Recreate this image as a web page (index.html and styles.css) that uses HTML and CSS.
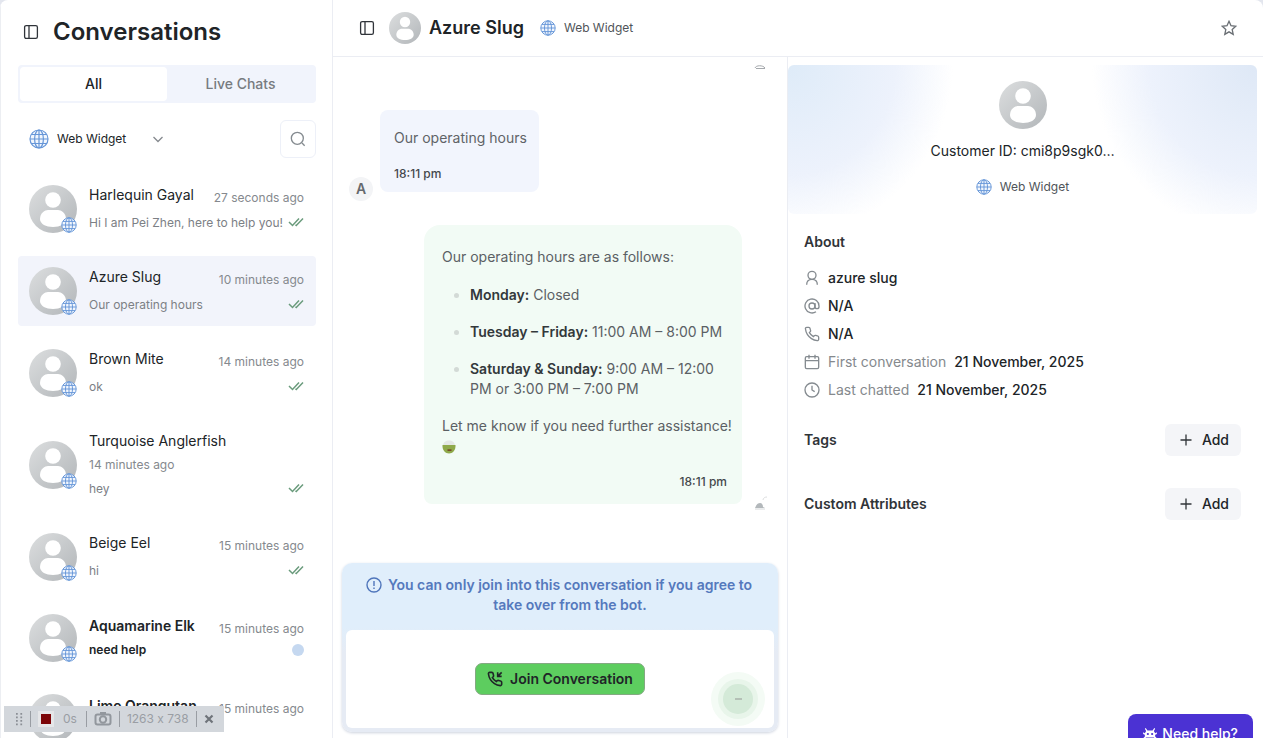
FILE: index.html
```html
<!DOCTYPE html>
<html lang="en">
<head>
<meta charset="utf-8">
<title>Conversations</title>
<link rel="stylesheet" href="styles.css">
</head>
<body>
<svg class="sprite" aria-hidden="true">
  <defs>
    <linearGradient id="silver" x1="0" y1="0" x2="1" y2="1">
      <stop offset="0" stop-color="#dcdedf"/><stop offset="1" stop-color="#b2b6b9"/>
    </linearGradient>
  </defs>
  <symbol id="person" viewBox="0 0 48 48">
    <circle cx="24" cy="24" r="24" fill="url(#silver)"/>
    <circle cx="24" cy="15" r="7.8" fill="#fff"/>
    <path d="M11 34c0-6 5-9 8-9h10c3 0 8 3 8 9 0 5-6 8-13 8s-13-3-13-8z" fill="#fff"/>
  </symbol>
  <symbol id="globe" viewBox="0 0 20 20">
    <g fill="none" stroke="#6696d8" stroke-width="1.2">
      <circle cx="10" cy="10" r="9" fill="#f1f6fd"/>
      <ellipse cx="10" cy="10" rx="4.4" ry="9"/>
      <path d="M10 1v18M1 10h18M2.5 5.5h15M2.5 14.5h15"/>
    </g>
  </symbol>
  <symbol id="panel" viewBox="0 0 16 16">
    <g fill="none" stroke="#30343a" stroke-width="1.3">
      <rect x="1.6" y="1.6" width="12.8" height="12.8" rx="1.6"/><path d="M6 1.6v12.8"/>
    </g>
  </symbol>
  <symbol id="checks" viewBox="0 0 16 12">
    <path d="M1 6l3.500 3.500L11 2.500M7.500 8.700l.8.8L15 2.500" fill="none" stroke="#6a9b7c" stroke-width="1.5"/>
  </symbol>
  <symbol id="phone" viewBox="0 0 24 24">
    <path d="M22 16.92v3a2 2 0 0 1-2.18 2 19.79 19.79 0 0 1-8.63-3.07 19.5 19.5 0 0 1-6-6 19.79 19.79 0 0 1-3.07-8.67A2 2 0 0 1 4.11 2h3a2 2 0 0 1 2 1.72c.127.96.361 1.903.7 2.81a2 2 0 0 1-.45 2.11L8.09 9.91a16 16 0 0 0 6 6l1.27-1.27a2 2 0 0 1 2.11-.45c.907.339 1.85.573 2.81.7A2 2 0 0 1 22 16.92z"/>
  </symbol>
</svg>

<div class="app">
  <aside class="sidebar">
    <header class="side-head">
      <button class="icon-btn" aria-label="Toggle sidebar"><svg class="i16"><use href="#panel"/></svg></button>
      <h1>Conversations</h1>
    </header>
    <div class="tabs" role="tablist">
      <button class="tab active" role="tab" aria-selected="true">All</button>
      <button class="tab" role="tab" aria-selected="false">Live Chats</button>
    </div>
    <div class="filters">
      <button class="channel">
        <svg class="i20"><use href="#globe"/></svg><span>Web Widget</span>
        <svg class="chevron" viewBox="0 0 12 12"><path d="M1.500 4l4.500 4.500L10.500 4"/></svg>
      </button>
      <button class="search" aria-label="Search"><svg class="i16 line" viewBox="0 0 24 24"><circle cx="11" cy="11" r="9"/><path d="M18 18l4 4"/></svg></button>
    </div>
    <ul class="list">
      <li class="item">
        <div class="avatar"><svg class="i48"><use href="#person"/></svg><svg class="badge"><use href="#globe"/></svg></div>
        <div class="body">
          <div class="row"><span class="name">Harlequin Gayal</span><time>27 seconds ago</time></div>
          <div class="row"><span class="msg">Hi I am Pei Zhen, here to help you!</span><svg class="checks"><use href="#checks"/></svg></div>
        </div>
      </li>
      <li class="item selected">
        <div class="avatar"><svg class="i48"><use href="#person"/></svg><svg class="badge"><use href="#globe"/></svg></div>
        <div class="body">
          <div class="row"><span class="name">Azure Slug</span><time>10 minutes ago</time></div>
          <div class="row"><span class="msg">Our operating hours</span><svg class="checks"><use href="#checks"/></svg></div>
        </div>
      </li>
      <li class="item">
        <div class="avatar"><svg class="i48"><use href="#person"/></svg><svg class="badge"><use href="#globe"/></svg></div>
        <div class="body">
          <div class="row"><span class="name">Brown Mite</span><time>14 minutes ago</time></div>
          <div class="row"><span class="msg">ok</span><svg class="checks"><use href="#checks"/></svg></div>
        </div>
      </li>
      <li class="item stacked">
        <div class="avatar"><svg class="i48"><use href="#person"/></svg><svg class="badge"><use href="#globe"/></svg></div>
        <div class="body">
          <div class="row"><span class="name">Turquoise Anglerfish</span></div>
          <time>14 minutes ago</time>
          <div class="row"><span class="msg">hey</span><svg class="checks"><use href="#checks"/></svg></div>
        </div>
      </li>
      <li class="item">
        <div class="avatar"><svg class="i48"><use href="#person"/></svg><svg class="badge"><use href="#globe"/></svg></div>
        <div class="body">
          <div class="row"><span class="name">Beige Eel</span><time>15 minutes ago</time></div>
          <div class="row"><span class="msg">hi</span><svg class="checks"><use href="#checks"/></svg></div>
        </div>
      </li>
      <li class="item unread">
        <div class="avatar"><svg class="i48"><use href="#person"/></svg><svg class="badge"><use href="#globe"/></svg></div>
        <div class="body">
          <div class="row"><span class="name">Aquamarine Elk</span><time>15 minutes ago</time></div>
          <div class="row"><span class="msg">need help</span><span class="dot"></span></div>
        </div>
      </li>
      <li class="item unread">
        <div class="avatar"><svg class="i48"><use href="#person"/></svg></div>
        <div class="body">
          <div class="row"><span class="name">Lime Orangutan</span><time>15 minutes ago</time></div>
        </div>
      </li>
    </ul>
  </aside>

  <main class="main">
    <header class="topbar">
      <button class="icon-btn" aria-label="Toggle list"><svg class="i16"><use href="#panel"/></svg></button>
      <svg class="i32"><use href="#person"/></svg>
      <h2>Azure Slug</h2>
      <span class="source"><svg class="i16"><use href="#globe"/></svg>Web Widget</span>
      <button class="icon-btn star" aria-label="Favourite"><svg class="i16 line" viewBox="0 0 24 24"><path d="M12 2l3 6.600 7.200.8-5.400 4.900 1.500 7.200-6.300-3.700-6.300 3.700 1.500-7.200L1.800 9.400 9 8.600z"/></svg></button>
    </header>
    <div class="content">
      <section class="chat">
        <div class="thread">
          <svg class="bot-peek" viewBox="0 0 12 6"><path d="M1 4c1-3 8-3 10 0M2 4.500h9" fill="none" stroke="#a5a9ad"/></svg>
          <div class="in">
            <span class="initial">A</span>
            <div class="bubble-in"><p>Our operating hours</p><time>18:11 pm</time></div>
          </div>
          <div class="out">
            <div class="bubble-out">
              <p>Our operating hours are as follows:</p>
              <ul>
                <li><b>Monday:</b> Closed</li>
                <li><b>Tuesday – Friday:</b> 11:00 AM – 8:00 PM</li>
                <li><b>Saturday &amp; Sunday:</b> 9:00 AM – 12:00 PM or 3:00 PM – 7:00 PM</li>
              </ul>
              <p>Let me know if you need further assistance!
                <svg class="emoji" viewBox="0 0 14 14" role="img" aria-label="smile"><path d="M1 6C1 2 4 .5 7 .5S13 2 13 6z" fill="#e4e7e5"/><path d="M.5 5h13c.5 5-3 8.500-6.500 8.500S0 10 .5 5z" fill="#8fa94a"/><path d="M5.500 9.500h4v1.200h-4z" fill="#6b2417"/></svg></p>
              <time>18:11 pm</time>
            </div>
            <svg class="bot" viewBox="0 0 14 14"><path d="M9 4c0-2 2-3 4-3" fill="none" stroke="#dcdedf"/><path d="M1 12c1-2 2-5 5-5 2 0 3 2 3 4l2 1z" fill="#b3b8bb"/><path d="M1 13h10" stroke="#d5d8da"/></svg>
          </div>
        </div>
        <div class="takeover">
          <div class="notice">
            <svg class="i16" viewBox="0 0 16 16"><g fill="none" stroke="#4f75bb" stroke-width="1.400"><circle cx="8" cy="8" r="7"/><path d="M8 4v5M8 10.500V12"/></g></svg>
            <p>You can only join into this conversation if you agree to take over from the bot.</p>
          </div>
          <div class="join-box">
            <button class="join"><svg class="i16 call" viewBox="0 0 24 24"><use href="#phone" width="24" height="24"/><path d="M22 2l-6 6M16 2v6h6"/></svg>Join Conversation</button>
            <span class="pulse"></span>
          </div>
        </div>
      </section>

      <aside class="details">
        <div class="hero">
          <svg class="i48"><use href="#person"/></svg>
          <p class="cid">Customer ID: cmi8p9sgk0…</p>
          <span class="source"><svg class="i16"><use href="#globe"/></svg>Web Widget</span>
        </div>
        <div class="facts">
          <h3>About</h3>
          <ul>
            <li><svg class="i16 line" viewBox="0 0 24 24"><circle cx="12" cy="8" r="6"/><path d="M4 22c0-5 3-8 8-8s8 3 8 8"/></svg><b>azure slug</b></li>
            <li><svg class="i16 line" viewBox="0 0 24 24"><circle cx="12" cy="12" r="4.500"/><path d="M16.500 7.500V13a3 3 0 0 0 6 0v-1a10.500 10.500 0 1 0-4.500 8.600"/></svg><b>N/A</b></li>
            <li><svg class="i16 line"><use href="#phone"/></svg><b>N/A</b></li>
            <li><svg class="i16 line" viewBox="0 0 24 24"><rect x="2" y="4" width="20" height="18" rx="2"/><path d="M2 10h20M7.500 1v6M16.500 1v6"/></svg><span>First conversation</span><b>21 November, 2025</b></li>
            <li><svg class="i16 line" viewBox="0 0 24 24"><circle cx="12" cy="12" r="10.500"/><path d="M12 5.500V12l4 2.500"/></svg><span>Last chatted</span><b>21 November, 2025</b></li>
          </ul>
        </div>
        <div class="section"><h3>Tags</h3><button class="add"><svg class="plus" viewBox="0 0 12 12"><path d="M6 .5v11M.5 6h11"/></svg>Add</button></div>
        <div class="section"><h3>Custom Attributes</h3><button class="add"><svg class="plus" viewBox="0 0 12 12"><path d="M6 .5v11M.5 6h11"/></svg>Add</button></div>
      </aside>
    </div>
  </main>
</div>

<div class="recorder">
  <svg class="grip" viewBox="0 0 8 16"><g fill="#8b8f95"><path d="M0 1h2v2H0zM5 1h2v2H5zM0 5h2v2H0zM5 5h2v2H5zM0 9h2v2H0zM5 9h2v2H5zM0 13h2v2H0zM5 13h2v2H5z"/></g></svg>
  <i class="bar"></i>
  <button class="rec" aria-label="Stop"></button>
  <span class="secs">0s</span>
  <i class="bar"></i>
  <svg class="camera" viewBox="0 0 18 14"><g fill="none" stroke="#92979d" stroke-width="2"><rect x="1.500" y="2.500" width="15" height="10" rx="2"/><circle cx="9" cy="7.500" r="3.200"/><path d="M6 1h6"/></g></svg>
  <i class="bar"></i>
  <span class="dims">1263 x 738</span>
  <i class="bar"></i>
  <button class="close" aria-label="Close"><svg viewBox="0 0 10 10"><path d="M1.500 1.500l7 7M8.500 1.500l-7 7" stroke="#6f747a" stroke-width="2.200"/></svg></button>
</div>

<button class="help">
  <svg viewBox="0 0 16 14" fill="#fff"><path d="M3 0l2 3h6l2-3 1 1-1.500 2.500L14 6l2-1v2l-2 1v2l2 2-1 1-2.500-2H3.500L1 13l-1-1 2-2V8L0 7V5l2 1 1.500-2.500L2 1z"/><circle cx="5.500" cy="7" r="1.300" fill="#4b32d3"/><circle cx="10.500" cy="7" r="1.300" fill="#4b32d3"/></svg>
  Need help?
</button>
</body>
</html>
```
FILE: styles.css
```css
* { box-sizing: border-box; }
body {
  margin: 0;
  height: 100vh;
  overflow: hidden;
  background: #e3e6ee;
  color: #202427;
  font: 14px/20px Inter, "Liberation Sans", sans-serif;
}
h1, h2, h3, p, ul { margin: 0; padding: 0; }
ul { list-style: none; }
button { font: inherit; color: inherit; border: 0; background: none; padding: 0; }
svg { flex: none; display: block; }
b { font-weight: 600; }
.sprite { position: absolute; width: 0; height: 0; }
.i16 { width: 16px; height: 16px; }
.i20 { width: 20px; height: 20px; }
.i32 { width: 32px; height: 32px; }
.i48 { width: 48px; height: 48px; }
.line { fill: none; stroke: #858b90; stroke-width: 2; }

.app {
  display: flex;
  height: 100%;
  background: #fff;
  border-radius: 8px 8px 0 0;
  overflow: hidden;
}

/* Sidebar */
.sidebar {
  width: 333px;
  flex: none;
  padding: 12px 16px 0 17px;
  border-left: 1px solid #eceef2;
  border-right: 1px solid #ebedf3;
  overflow: hidden;
}
.side-head { display: flex; align-items: center; gap: 14px; padding-left: 5px; height: 40px; }
h1 { font-size: 24px; line-height: 40px; font-weight: 600; }
.tabs {
  display: flex;
  height: 38px;
  margin-top: 13px;
  padding: 2px;
  background: #f1f4fc;
  border-radius: 4px;
}
.tab { flex: 1; border-radius: 4px; color: #777b80; font-weight: 500; }
.tab.active { background: #fff; color: #202427; }
.filters { display: flex; justify-content: space-between; align-items: center; margin-top: 17px; }
.channel { display: flex; align-items: center; gap: 8px; padding-left: 11px; font-size: 12px; }
.chevron { width: 12px; height: 12px; margin-left: 18px; fill: none; stroke: #85898e; stroke-width: 1.3; }
.search {
  width: 36px;
  height: 38px;
  display: grid;
  place-items: center;
  border: 1px solid #edf0f8;
  border-radius: 6px;
}
.list { display: flex; flex-direction: column; gap: 12px; margin-top: 16px; }
.item { display: flex; align-items: center; gap: 12px; padding: 11px 12px 11px 11px; border-radius: 4px; }
.selected { background: #f2f4fb; }
.avatar { position: relative; }
.badge { position: absolute; right: 0; bottom: 0; width: 16px; height: 16px; }
.body { flex: 1; min-width: 0; display: flex; flex-direction: column; gap: 8px; }
.row { display: flex; justify-content: space-between; align-items: flex-start; height: 20px; white-space: nowrap; }
.item time { color: #85898e; font-size: 12px; }
.row time { margin-top: 3px; }
.msg { color: #7c8085; font-size: 12px; }
.checks { width: 16px; height: 12px; margin-top: 3px; }
.stacked .body, .unread .body { gap: 4px; }
.unread { align-items: flex-start; min-height: 68px; padding-top: 10px; padding-bottom: 10px; }
.unread .body { padding-top: 2px; }
.unread .name, .unread .msg { color: #202427; font-weight: 600; }
.dot { width: 12px; height: 12px; margin-top: 4px; border-radius: 50%; background: #c5d8f0; }

/* Main area */
.main { flex: 1; min-width: 0; display: flex; flex-direction: column; }
.topbar {
  display: flex;
  align-items: center;
  height: 57px;
  flex: none;
  padding: 0 26px;
  border-bottom: 1px solid #ebedf3;
}
.topbar .i32 { margin: 0 8px 0 14px; }
h2 { font-size: 18px; line-height: 28px; font-weight: 600; }
.source { display: flex; align-items: center; gap: 8px; color: #505459; font-size: 12px; }
.topbar .source { margin-left: 16px; }
.star { margin-left: auto; }
.star .line { stroke: #6a6f74; }
.content { flex: 1; min-height: 0; display: flex; }

/* Chat */
.chat {
  width: 455px;
  flex: none;
  display: flex;
  flex-direction: column;
  justify-content: space-between;
  padding: 7px 9px 6px;
  border-right: 1px solid #ebedf3;
}
.bot-peek { width: 12px; height: 6px; margin: 0 12px 40px auto; }
.in { display: flex; align-items: flex-end; gap: 7px; padding-left: 7px; }
.initial {
  width: 24px;
  height: 24px;
  margin-bottom: -9px;
  border-radius: 50%;
  background: #f3f4f6;
  color: #66696d;
  line-height: 24px;
  font-weight: 600;
  text-align: center;
}
.bubble-in { padding: 18px 12px 8px 14px; border-radius: 8px; background: #f2f5fd; color: #5f6367; }
.bubble-in time, .bubble-out time { display: block; font-size: 12px; font-weight: 500; color: #44484c; }
.bubble-in time { margin-top: 16px; }
.out { display: flex; justify-content: flex-end; align-items: flex-end; gap: 12px; margin-top: 33px; padding-right: 10px; }
.bubble-out { width: 318px; padding: 22px 8px 12px 18px; border-radius: 16px 16px 8px 8px; background: #f2fbf5; color: #5b6064; }
.bubble-out ul { display: flex; flex-direction: column; gap: 17px; margin: 18px 0 17px; padding-left: 28px; list-style: disc; }
.bubble-out li::marker { color: #d3dad6; }
.bubble-out b { color: #33383b; }
.bubble-out time { margin-top: 16px; padding-right: 7px; text-align: right; }
.emoji { display: inline-block; width: 14px; height: 14px; vertical-align: middle; }
.bot { width: 14px; height: 14px; margin-bottom: -6px; }
.takeover { border-radius: 10px; padding: 0 4px 4px; background: linear-gradient(#e0eefb 64px, #e6ebf4 90px); box-shadow: 0 1px 3px #ccd2de; }
.notice { display: flex; justify-content: center; gap: 4px; padding: 12px 20px 15px; color: #5579bd; font-weight: 600; text-align: center; }
.notice svg { margin-top: 2px; }
.join-box { position: relative; display: grid; place-items: center; height: 98px; border-radius: 6px; background: #fff; }
.join {
  display: flex;
  align-items: center;
  gap: 7px;
  height: 32px;
  padding: 0 11px;
  border: 1px solid #84a982;
  border-radius: 7px;
  background: #5dcd5f;
  font-weight: 600;
}
.call { fill: none; stroke: #202427; stroke-width: 2.4; }
.pulse {
  position: absolute;
  right: 21px;
  bottom: 14px;
  width: 30px;
  height: 30px;
  border-radius: 50%;
  background: linear-gradient(#b4c0b6, #b4c0b6) center / 7px 2px no-repeat #d4ead8;
  box-shadow: 0 0 0 5px #e8f5ea, 0 0 0 12px #f4fbf5;
}

/* Customer details */
.details { flex: 1; min-width: 0; padding: 8px 6px 0 0; }
.hero {
  display: flex;
  flex-direction: column;
  align-items: center;
  height: 149px;
  padding-top: 16px;
  border-radius: 6px;
  background:
    radial-gradient(ellipse 165px 170px at 0 0, #deebf8, #edf2fc 65%, #edf2fc00),
    radial-gradient(ellipse 165px 170px at 100% 0, #dee8f6, #edf2fc 65%, #edf2fc00);
}
.cid { margin: 12px 0 16px; }
.facts { padding: 18px 16px 0; }
h3 { font-size: 14px; line-height: 20px; font-weight: 600; color: #303438; }
.facts ul { display: flex; flex-direction: column; gap: 8px; margin-top: 16px; }
.facts li { display: flex; align-items: center; gap: 8px; }
.facts b { font-weight: 500; }
.facts span { color: #85898d; }
.section { display: flex; align-items: center; justify-content: space-between; margin-top: 32px; padding: 0 16px; }
.facts + .section { margin-top: 24px; }
.add { display: flex; align-items: center; gap: 10px; height: 32px; padding: 0 12px 0 15px; border-radius: 6px; background: #f4f5f8; font-weight: 500; }
.plus { width: 12px; height: 12px; stroke: #303438; stroke-width: 1.3; }

/* Floating widgets */
.recorder {
  position: fixed;
  left: 4px;
  bottom: 6px;
  display: flex;
  align-items: center;
  gap: 7px;
  width: 220px;
  height: 26px;
  padding: 0 8px 0 12px;
  background: #d3d7dc;
  color: #9a9ea4;
  font-size: 12px;
}
.grip { width: 7px; height: 16px; }
.bar { width: 1px; height: 16px; background: #999da3; }
.rec { width: 16px; height: 16px; border: 3px solid #e5e6e8; background: #7c0508; }
.secs { padding: 0 2px; }
.camera { width: 18px; height: 14px; }
.dims { white-space: nowrap; font-variant-ligatures: none; font-feature-settings: "calt" 0; }
.close svg { width: 10px; height: 10px; }
.help {
  position: fixed;
  right: 10px;
  bottom: -16px;
  display: flex;
  align-items: center;
  gap: 5px;
  height: 40px;
  padding: 0 15px;
  border-radius: 8px;
  background: #4b32d3;
  color: #fff;
  font-weight: 500;
}
.help svg { width: 14px; height: 12px; }
```
